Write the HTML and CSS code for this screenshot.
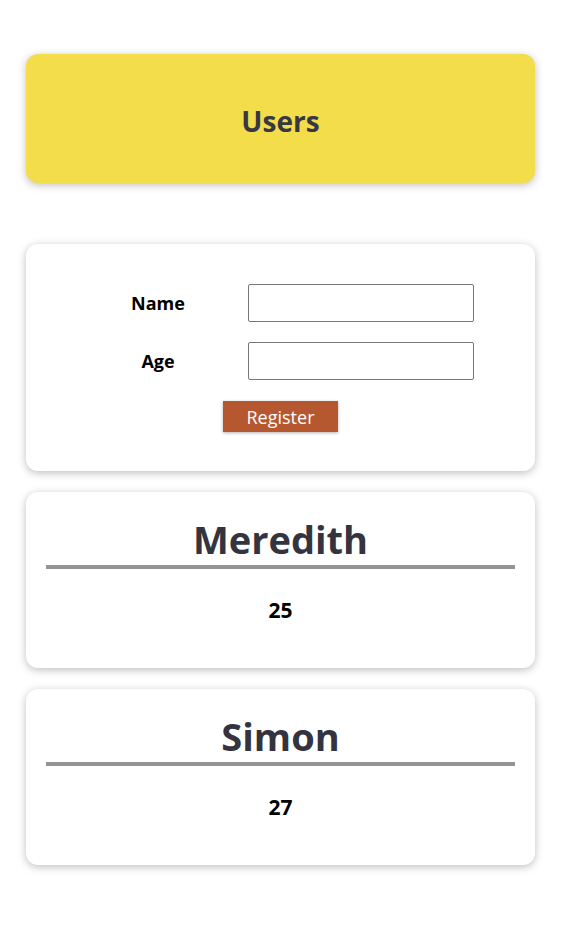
FILE: index.html
```html
<!DOCTYPE html>
<html lang="en">
<head>
    <meta charset="UTF-8">
    <meta name="viewport" content="width=device-width, initial-scale=1.0">
    <title>Users</title>
    <link rel="stylesheet" href="styles.css">
</head>
<body>
    <div class="page">
        <header class="card header">
            <h1>Users</h1>
        </header>

        <form class="card form" onsubmit="return false;">
            <div class="form-grid">
                <label for="name">Name</label>
                <input type="text" id="name">
                <label for="age">Age</label>
                <input type="number" id="age">
            </div>
            <button type="submit" class="register">Register</button>
        </form>

        <div class="card user">
            <h2>Meredith</h2>
            <p>25</p>
        </div>

        <div class="card user">
            <h2>Simon</h2>
            <p>27</p>
        </div>
    </div>
</body>
</html>
```

FILE: styles.css
```css
body {
    font-family: 'Open Sans', 'Noto Sans', sans-serif;
    background-color: #fff;
    margin: 0;
    padding: 0;
    color: #000;
}
.page {
    padding: 54px 26px 40px;
}
.card {
    background: #fff;
    border-radius: 12px;
    box-shadow: 0 2px 8px rgba(0, 0, 0, 0.26);
}
.header {
    background-color: #f4dd4b;
    height: 129px;
    display: flex;
    align-items: center;
    justify-content: center;
    margin-bottom: 61px;
}
.header h1 {
    margin: 4px 0 0;
    font-size: 28px;
    font-weight: 700;
    color: #383845;
}
.form {
    padding: 40px 0 39px;
    display: flex;
    flex-direction: column;
    align-items: center;
    margin-bottom: 21px;
}
.form-grid {
    display: grid;
    grid-template-columns: 142px 226px;
    column-gap: 19px;
    row-gap: 20px;
    align-items: center;
    justify-items: center;
    margin-bottom: 21px;
}
label {
    font-weight: bold;
    font-size: 18px;
}
input {
    width: 226px;
    height: 38px;
    box-sizing: border-box;
    border: 1px solid #767676;
    border-radius: 2px;
    padding: 4px 6px;
    font: inherit;
}
.register {
    width: 115px;
    height: 31px;
    border: none;
    background-color: #b5582f;
    color: #fff;
    font-family: inherit;
    font-size: 18px;
    padding: 0;
    box-shadow: 0 1px 3px rgba(0, 0, 0, 0.3);
    cursor: pointer;
}
.user {
    height: 176px;
    box-sizing: border-box;
    padding: 22px 20px 0;
    margin-bottom: 21px;
    text-align: center;
}
.user h2 {
    margin: 0;
    font-size: 38px;
    font-weight: 700;
    line-height: 51px;
    color: #33343f;
    border-bottom: 4px solid #949494;
}
.user p {
    margin: 27px 0 0;
    font-size: 21px;
    font-weight: bold;
}
```
